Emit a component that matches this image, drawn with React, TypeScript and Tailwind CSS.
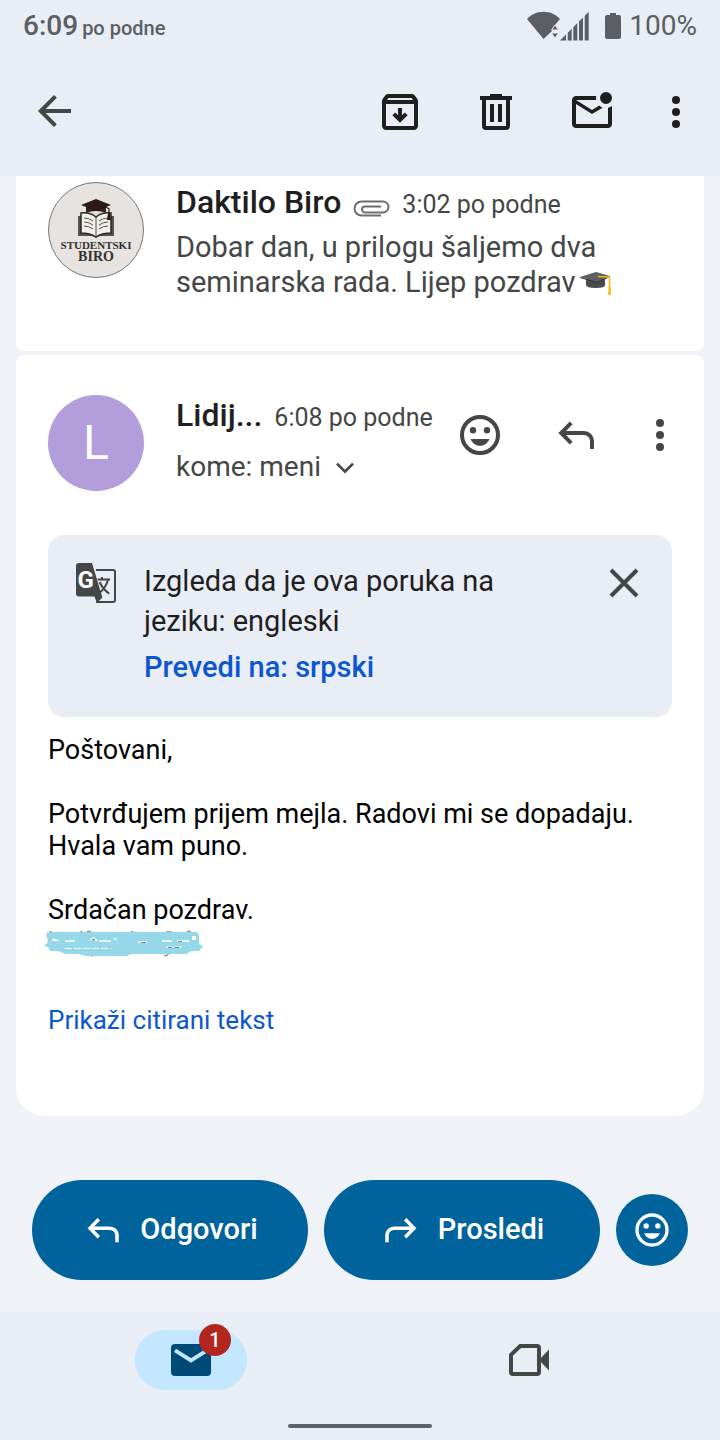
import type { ReactNode } from "react";

const ui = "font-['Roboto','Liberation_Sans',sans-serif]";

function Icon({ children, className = "size-12" }: { children: ReactNode; className?: string }) {
  return (
    <svg viewBox="0 0 24 24" fill="currentColor" aria-hidden="true" className={`${className} shrink-0`}>
      {children}
    </svg>
  );
}

function ReplyIcon({ className }: { className?: string }) {
  return (
    <Icon className={className}>
      <path d="M9.6 5.9 4.6 11l5 5.100M4.600 11h11.400a4 4 0 0 1 4 4v4" fill="none" stroke="currentColor" strokeWidth={2} />
    </Icon>
  );
}

function ForwardIcon({ className }: { className?: string }) {
  return (
    <Icon className={className}>
      <path d="M14.400 5.900 19.400 11l-5 5.100M19.400 11H8a4 4 0 0 0-4 4v4" fill="none" stroke="currentColor" strokeWidth={2} />
    </Icon>
  );
}

function SmileIcon({ className }: { className?: string }) {
  return (
    <Icon className={className}>
      <circle cx={12} cy={12} r={9} fill="none" stroke="currentColor" strokeWidth={2} />
      <circle cx={8.5} cy={9.6} r={1.6} />
      <circle cx={15.5} cy={9.6} r={1.6} />
      <path d="M7.3 14h9.4c-.8 2-2.6 3.400-4.700 3.400S8.100 16 7.300 14z" />
    </Icon>
  );
}

function MoreIcon() {
  return (
    <Icon>
      <circle cx={12} cy={6} r={2} />
      <circle cx={12} cy={12} r={2} />
      <circle cx={12} cy={18} r={2} />
    </Icon>
  );
}

function StatusBar() {
  return (
    <div className="flex h-[52px] items-center justify-between px-[23px] text-[#5b5e63]">
      <div className="flex items-baseline gap-1 font-medium">
        <span className="text-[28px] leading-8">6:09</span>
        <span className="text-xl">po podne</span>
      </div>
      <div className="flex items-center">
        <svg viewBox="0 0 62 30" fill="currentColor" className="mr-4 h-[30px] w-[62px]" aria-hidden="true">
          <path d="M0 8C4 3.500 10 .7 16.500.7S29 3.500 33 8l-5 6-3 4v2l-8.500 8z" />
          <path d="M28 14l3.500 5h-7zM28 27l3.500-5h-7z" stroke="#e9edf6" strokeWidth={1} />
          <clipPath id="signal">
            <path d="M33 29.500 62 .5v29z" />
          </clipPath>
          <g clipPath="url(#signal)">
            <rect x={33} width={6} height={30} />
            <rect x={40.700} width={4} height={30} />
            <rect x={46.300} width={4} height={30} />
            <rect x={52} width={4} height={30} />
            <rect x={57.700} width={4} height={30} />
          </g>
        </svg>
        <svg viewBox="0 0 16 26" fill="currentColor" className="mr-2 h-[26px] w-4" aria-hidden="true">
          <path d="M5 0h6v2h3a2 2 0 0 1 2 2v20a2 2 0 0 1-2 2H2a2 2 0 0 1-2-2V4a2 2 0 0 1 2-2h3z" />
        </svg>
        <span className="text-[28px] leading-8">100%</span>
      </div>
    </div>
  );
}

function Toolbar() {
  return (
    <div className="flex h-30 items-center justify-between pr-2 pl-[31px] text-[#1f1f1f]">
      <button aria-label="Nazad" className="text-[#444746]">
        <Icon>
          <path d="M20 11.500H5.500M12.200 4.200 4.900 11.500l7.300 7.300" fill="none" stroke="currentColor" strokeWidth={2} />
        </Icon>
      </button>
      <div className="flex">
        <button aria-label="Arhiviraj" className="flex w-24 justify-center">
          <Icon>
            <path
              fillRule="evenodd"
              d="m20.540 5.230-1.390-1.680C18.880 3.210 18.470 3 18 3H6c-.47 0-.88.21-1.160.55L3.460 5.230C3.170 5.570 3 6.020 3 6.500V19c0 1.100.9 2 2 2h14c1.100 0 2-.9 2-2V6.500c0-.48-.17-.93-.46-1.270zM6.240 5h11.520l.83 1H5.420zM5 19V8h14v11z"
            />
            <path d="M12 10v6M8.900 12.900l3.100 3.100 3.100-3.100" fill="none" stroke="currentColor" strokeWidth={2} />
          </Icon>
        </button>
        <button aria-label="Izbriši" className="flex w-24 justify-center">
          <Icon>
            <path
              fillRule="evenodd"
              d="M9 3h6v1h5v2h-1v13a2 2 0 0 1-2 2H7a2 2 0 0 1-2-2V6H4V4h5zM7 6v13h10V6zM9 8h2v9H9zM13 8h2v9h-2z"
            />
          </Icon>
        </button>
        <button aria-label="Označi kao nepročitano" className="flex w-24 justify-center">
          <Icon>
            <path d="M4 20q-.825 0-1.412-.587Q2 18.825 2 18V6q0-.825.588-1.412Q3.175 4 4 4h10.100q-.1.500-.1 1t.1 1H4l8 5 3.650-2.275q.375.350.787.612t.863.488L12 13 4 8v10h16V9.900q.575-.125 1.075-.350T22 9v9q0 .825-.587 1.413Q20.825 20 20 20ZM19 8q-1.250 0-2.125-.875T16 5q0-1.250.875-2.125T19 2q1.250 0 2.125.875T22 5q0 1.250-.875 2.125T19 8Z" />
          </Icon>
        </button>
        <button aria-label="Još opcija" className="flex w-18 justify-center">
          <MoreIcon />
        </button>
      </div>
    </div>
  );
}

function BiroLogo() {
  return (
    <svg viewBox="0 0 96 96" className="size-24 shrink-0" role="img" aria-label="Studentski Biro">
      <circle cx={48} cy={48} r={47.500} fill="#e6e3e0" stroke="#77777a" />
      {/* book */}
      <path d="M30 34v20h13q3 0 5 2 2-2 5-2h13V34" fill="#56524f" />
      <path d="M33 31q9-1 15 4 6-5 15-4v20q-9 0-15 4-6-4-15-4z" fill="#f1efec" stroke="#2b2928" strokeWidth={1.500} />
      <path
        d="M48 35v19M36 36q5 0 9 3M36 40q5 0 9 3M36 44q5 0 9 3M60 36q-5 0-9 3M60 40q-5 0-9 3M60 44q-5 0-9 3"
        fill="none"
        stroke="#55514e"
        strokeWidth={1}
      />
      {/* cap */}
      <path d="M38 24v7q10-4 20 0v-7z" fill="#3a201c" />
      <path d="M48 17 63 23 48 29 33 23z" fill="#2a1b19" />
      <path d="M48 23q10 1 13 4v6" fill="none" stroke="#2a1b19" strokeWidth={1.200} />
      <path d="M60 31h2l1 7h-4z" fill="#2a1b19" />
      <g fill="#333130" textAnchor="middle" className="font-['Liberation_Serif',serif] font-bold">
        <text x={48} y={67} fontSize={11}>STUDENTSKI</text>
        <text x={48} y={79} fontSize={14}>BIRO</text>
      </g>
    </svg>
  );
}

function GradCap() {
  return (
    <svg viewBox="0 0 32 24" className="ml-1 inline h-6 w-8 align-[-4px]" role="img" aria-label="Diplomska kapa">
      <path d="M6 7v6q0 3 10 3 9 0 9-3V7z" fill="#4a4e50" />
      <path d="M0 5 16 0l14 4-13 6z" fill="#5b5f61" />
      <path d="M0 5l17 5 13-6v1l-13 6L0 6z" fill="#333638" />
      <path d="M18 4.500 29.500 5v12" fill="none" stroke="#f6b91d" strokeWidth={1.600} />
      <path d="M28.500 15h2.500v8h-3z" fill="#fbc02d" />
    </svg>
  );
}

function PreviousMessage() {
  return (
    <article className="flex gap-8 rounded-b-lg bg-white px-8 pt-1.5 pb-[51px]">
      <BiroLogo />
      <div className="min-w-0">
        <div className="flex h-12 items-baseline gap-3">
          <h2 className="text-[32px] leading-10 font-medium text-[#1f1f1f]">Daktilo Biro</h2>
          <svg viewBox="0 0 37 17" className="mt-1 h-[17px] w-[37px] self-center" role="img" aria-label="Prilog">
            <path
              d="M28 15.500H8.500a7 7 0 0 1 0-14H30a5 5 0 0 1 0 11H12a3 3 0 0 1 0-6h16"
              fill="none"
              stroke="#6b6e6d"
              strokeWidth={2}
            />
          </svg>
          <time className="text-[25px] text-[#444746]">3:02 po podne</time>
        </div>
        <p className="text-[29px] leading-[35px] text-[#444746]">
          Dobar dan, u prilogu šaljemo dva
          <br />
          seminarska rada. Lijep pozdrav
          <GradCap />
        </p>
      </div>
    </article>
  );
}

function MessageHeader() {
  return (
    <header className="flex pr-2 pl-8">
      <div className="mr-8 flex size-24 shrink-0 items-center justify-center rounded-full bg-[#b39ddb] text-5xl text-white">
        L
      </div>
      <div className="min-w-0 flex-1">
        <div className="flex h-10 items-baseline gap-3">
          <h2 className="text-[32px] leading-10 font-medium text-[#1f1f1f]">Lidij...</h2>
          <time className="text-[25px] whitespace-nowrap text-[#444746]">6:08 po podne</time>
        </div>
        <button className="mt-3 flex items-center gap-2 text-[28px] leading-10 text-[#444746]">
          kome: meni
          <Icon className="size-8">
            <path d="m6 9.500 6 6 6-6" fill="none" stroke="currentColor" strokeWidth={2} />
          </Icon>
        </button>
      </div>
      <div className="flex h-20 items-center text-[#444746]">
        <button aria-label="Dodaj reakciju" className="flex w-24 justify-center">
          <SmileIcon />
        </button>
        <button aria-label="Odgovori" className="flex w-24 justify-center">
          <ReplyIcon />
        </button>
        <button aria-label="Još opcija poruke" className="flex w-18 justify-center">
          <MoreIcon />
        </button>
      </div>
    </header>
  );
}

function TranslateBanner() {
  return (
    <section className="mx-8 mt-11 flex items-start rounded-2xl bg-[#e9edf6] px-6 pt-6 pb-[30px]">
      <Icon className="mr-6 size-12 text-[#444746]">
        <path d="M12 5h8.500A1.500 1.500 0 0 1 22 6.500v14a1.500 1.500 0 0 1-1.500 1.500H12z" />
        <path d="M12 6h8.500a.5.5 0 0 1 .5.5v14a.5.5 0 0 1-.5.5H12z" fill="#e9edf6" />
        <path d="M3.500 2H10l5.200 17.200-2.700 2.800-1.300-3.200H3.500A1.500 1.500 0 0 1 2 17.300V3.500A1.500 1.500 0 0 1 3.500 2z" />
        <text x={2.700} y={14.400} fontSize={12} fill="#ffffff" className="font-['Roboto',sans-serif] font-bold">G</text>
        <path
          d="M12.800 10.300H19M15 9v1.300M18 10.300q-1 4-4 6.500M13.800 11.500q1.500 3.500 4.800 5.800"
          fill="none"
          stroke="currentColor"
          strokeWidth={1}
        />
      </Icon>
      <div className="flex-1 pt-0.5 text-[29px] text-[#1f1f1f]">
        <p className="leading-10">
          Izgleda da je ova poruka na
          <br />
          jeziku: engleski
        </p>
        <a href="#prevedi" className="mt-1.5 block leading-10 font-medium text-[#0b57d0]">
          Prevedi na: srpski
        </a>
      </div>
      <button aria-label="Zatvori" className="text-[#444746]">
        <Icon>
          <path d="m5.500 5.500 13 13M18.500 5.500l-13 13" fill="none" stroke="currentColor" strokeWidth={2} />
        </Icon>
      </button>
    </section>
  );
}

function Signature() {
  return (
    <svg viewBox="0 0 160 28" className="mt-1 -ml-1 h-7 w-40" aria-hidden="true">
      <path d="M5 2h3M36 2h3M43 1.500h4M87 2h3M122 2h6M143 1.500h4M46 25q2 2 4-1M120 25q3 2 5-2" stroke="#8b8d8f" strokeWidth={1.500} fill="none" />
      <path
        d="M2 3 10 2h143l2 3v9l4 2-4 5h-8l-4 3h-55l-6 2H42l-8-2H22l-8-3H6l-2-4-4-1 4-4z"
        fill="#96d8e9"
      />
      <path d="M9 8l7 3H8zM148 6h4v4h-4z" fill="#ffffff" />
      <path d="M21 11h10M46 10l4-2 3 3M55 11h12M70 9h3M94 12h9M118 11h10M133 11h12" stroke="#ffffff" strokeWidth={1.500} fill="none" />
      <path d="M21 18.500h46M122 17h18" stroke="#ffffff" strokeWidth={1} strokeDasharray="7 2" />
      <path d="M48 9.500h3M97 12.500h5M134 11.500h4M124 17.500h4M131 17.500h4" stroke="#7d8486" strokeWidth={1} />
    </svg>
  );
}

function CurrentMessage() {
  return (
    <article className="mt-1 flex-1 rounded-t-lg rounded-b-[28px] bg-white pt-10">
      <MessageHeader />
      <TranslateBanner />
      <div className="px-8 pt-[17px] text-[27px] leading-8 text-black">
        <p>Poštovani,</p>
        <p className="mt-8">
          Potvrđujem prijem mejla. Radovi mi se dopadaju.
          <br />
          Hvala vam puno.
        </p>
        <p className="mt-8">Srdačan pozdrav.</p>
        <Signature />
        <a href="#citirano" className="mt-[46px] block text-[26px] text-[#0b57d0]">
          Prikaži citirani tekst
        </a>
      </div>
    </article>
  );
}

function ReplyActions() {
  const pill = "flex h-25 flex-1 items-center justify-center gap-4 rounded-full bg-[#00639b] text-[29px] font-medium";
  return (
    <div className="flex items-center gap-4 px-8 pt-16 pb-8 text-white">
      <button className={pill}>
        <ReplyIcon className="size-[42px]" />
        Odgovori
      </button>
      <button className={pill}>
        <ForwardIcon className="size-[42px]" />
        Prosledi
      </button>
      <button aria-label="Reakcija" className="flex size-18 items-center justify-center rounded-full bg-[#00639b]">
        <SmileIcon className="size-10" />
      </button>
    </div>
  );
}

function BottomNav() {
  return (
    <nav className="flex h-32 flex-col justify-between bg-[#e9edf6] px-[22px] pt-[18px] pb-3">
      <div className="grid grid-cols-2 justify-items-center">
        <a
          href="#posta"
          aria-label="Pošta"
          className="relative flex h-15 w-28 items-center justify-center rounded-full bg-[#c2e7ff] text-[#004a77]"
        >
          <Icon>
            <path d="M4 4h16a2 2 0 0 1 2 2v12a2 2 0 0 1-2 2H4a2 2 0 0 1-2-2V6a2 2 0 0 1 2-2z" />
            <path d="m4 7.200 8 5 8-5" fill="none" stroke="#c2e7ff" strokeWidth={1.900} />
          </Icon>
          <span className="absolute -top-1.5 right-4 flex size-8 items-center justify-center rounded-full bg-[#b3261e] text-xl font-medium text-white">
            1
          </span>
        </a>
        <a href="#sastanci" aria-label="Sastanci" className="flex h-15 w-28 items-center justify-center text-[#444746]">
          <Icon>
            <path
              d="M7.600 5H16a1 1 0 0 1 1 1v12a1 1 0 0 1-1 1H4a1 1 0 0 1-1-1V9.400z"
              fill="none"
              stroke="currentColor"
              strokeWidth={2}
            />
            <path d="M22 6.700v10.600L17 12z" />
          </Icon>
        </a>
      </div>
      <div className="mx-auto h-1 w-36 rounded-full bg-[#5f6166]" />
    </nav>
  );
}

export default function App() {
  return (
    <div className={`flex min-h-screen flex-col bg-[#eff3f8] ${ui}`}>
      <div className="bg-[#e9edf5] pb-1">
        <StatusBar />
        <Toolbar />
      </div>
      <main className="flex flex-1 flex-col px-4">
        <PreviousMessage />
        <CurrentMessage />
      </main>
      <ReplyActions />
      <BottomNav />
    </div>
  );
}
